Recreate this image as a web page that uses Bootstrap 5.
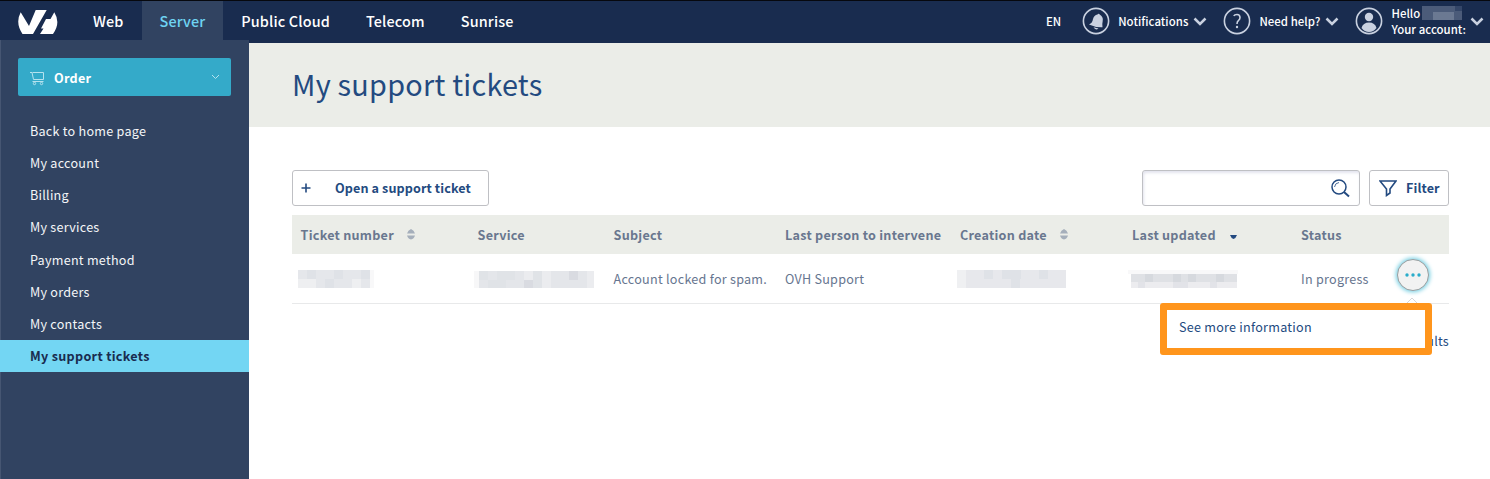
<!DOCTYPE html>
<html lang="en">
<head>
<meta charset="utf-8">
<meta name="viewport" content="width=device-width, initial-scale=1">
<title>My support tickets</title>
<link href="https://cdn.jsdelivr.net/npm/bootstrap@5.3.0/dist/css/bootstrap.min.css" rel="stylesheet">
<style>
  body { font-family: "Noto Sans CJK SC", "Open Sans", sans-serif; font-size: 12.6px; line-height: 20px; letter-spacing: .25px; color: #66758f; height: 479px; overflow: hidden; }
  .topbar { height: 43px; background: #192c4f; border-top: 1px solid #06080e; color: #fff; }
  .topbar .tab { height: 39px; color: #fff; font-size: 14.4px; font-weight: 500; line-height: 39px; padding: 0 18px; letter-spacing: .15px; text-decoration: none; white-space: nowrap; }
  .topbar .tab.on { background: #314361; color: #6fd3f2; }
  .logo { margin: 8px 16px 0 17px; }
  .tools { font-size: 11.4px; font-weight: 500; letter-spacing: .05px; white-space: nowrap; height: 40px; }
  .tools .who { line-height: 16px; margin: 0 4px 0 8px; }
  .t-en { margin-right: 21px; }
  .t-not, .t-help { margin: 0 5px 0 8px; }
  .i-help, .i-user { margin-left: 16px; }
  .tools .chev:last-child { margin-right: 6px; }
  .side { width: 249px; margin-top: -3px; height: 439px; background: #314361; border-left: 1px solid #465672; z-index: 2; }
  .order { margin: 18px 18px 19px 17px; height: 38px; border-radius: 2px; background: #34aac9; color: #fff; font-weight: 700; padding: 0 11px 0 12px; }
  .order span { padding-top: 2px; }
  .side a { height: 32.13px; line-height: 32px; padding-left: 29px; color: #f4f6f8; text-decoration: none; }
  .side a.on { margin-left: -1px; padding-left: 30px; background: #73d6f3; color: #192c4f; font-weight: 700; letter-spacing: .3px; height: 32px; }
  .headband { height: 84px; background: #ebede8; padding-left: 43px; }
  .headband h1 { font-size: 28.8px; font-weight: 400; line-height: 81px; color: #234a80; letter-spacing: .25px; }
  .work { padding: 43px 41px 0 43px; }
  .box { height: 36px; border: 1px solid #bfc0c4; border-radius: 3px; background: #fff; color: #234a80; font-weight: 700; letter-spacing: .1px; }
  .t-open { width: 197px; }
  .t-open span { margin-left: 16px; }
  .t-filter { width: 80px; margin-left: 9px; padding-left: 9px; }
  .t-filter span { margin-left: 9px; }
  .search { width: 218px; box-shadow: inset 1px 2px 3px #e3e4ee; padding-right: 9px; }
  .tickets { table-layout: fixed; width: 1157px; margin: 9px 0 0; border-collapse: separate; border-spacing: 0; }
  .tickets th, .tickets td { padding: 0 0 0 9px; white-space: nowrap; vertical-align: middle; }
  .tickets th:nth-child(-n+3), .tickets td:nth-child(3) { padding-left: 8.6px; }
  .tickets th { height: 39px; background: #ebede8; font-weight: 700; color: #69778f; }
  .tickets td { height: 50px; padding-top: 1px; border-bottom: 1px solid #e8e9ea; }
  .sorter { margin: -3px 0 0 13px; }
  .sorter.down { margin: 3px 0 0 14px; }
  .mosaic { display: block; }
  .dots { width: 32px; height: 32px; border: 1px solid #999ea0; border-radius: 50%; background: #f2f2f2; box-shadow: 0 0 4px 1px #6fcce0; padding: 0; margin-top: -8px; }
  .pop { left: -237px; top: 44px; width: 272px; height: 52px; border: 7px solid #ff951c; border-radius: 3px; background: #fff; color: #234a80; padding-left: 12px; line-height: 34px; z-index: 3; }
  .notch { left: 8px; top: 38px; }
  .count { color: #234a80; margin-top: 27px; }
</style>
</head>
<body>
<header class="topbar d-flex">
  <svg class="logo flex-shrink-0" width="42" height="26" viewBox="0 0 42 26"><path fill="#fff" d="M3.700 3.300 12 17 18.700 1H29.700L16 25H5.500Q-2 14 3.700 3.300ZM37.300 3.300Q44 14 36 25H23L26.500 19.500H24L29 10H33.500Z"/></svg>
  <nav class="d-flex">
    <a class="tab" href="#">Web</a><a class="tab on" href="#">Server</a><a class="tab" href="#">Public Cloud</a><a class="tab" href="#">Telecom</a><a class="tab" href="#">Sunrise</a>
  </nav>
  <div class="tools d-flex align-items-center ms-auto">
    <span class="t-en">EN</span>
    <svg width="28" height="28" viewBox="0 0 28 28"><circle cx="14" cy="14" r="12.600" fill="none" stroke="#c9d1e0" stroke-width="1.600"/><path fill="#c9d1e0" d="M7 17.500Q10.500 16 11 12Q12 8 15.500 7.500Q16.500 6 18 7.800Q21.500 10 20.700 14Q20 17 20.500 20.300Q13 20.500 7 17.500ZM11.500 20.300 16.500 21.500Q13.500 23.800 11.500 20.300Z"/></svg>
    <span class="t-not">Notifications</span>
    <svg class="chev" width="14" height="9" viewBox="0 0 14 9"><path d="M1.500 1.500 7 7 12.500 1.500" fill="none" stroke="#c9d1e0" stroke-width="2.500"/></svg>
    <svg class="i-help" width="28" height="28" viewBox="0 0 28 28"><circle cx="14" cy="14" r="12.600" fill="none" stroke="#c9d1e0" stroke-width="1.600"/><path d="M10.800 9Q11.500 7.500 14 7.500Q17 7.500 17 10.500Q17 12.300 15.500 13.500Q14 14.500 14 17" fill="none" stroke="#c9d1e0" stroke-width="1.600"/><circle cx="14" cy="20" r="1.200" fill="#c9d1e0"/></svg>
    <span class="t-help">Need help?</span>
    <svg class="chev" width="14" height="9" viewBox="0 0 14 9"><path d="M1.500 1.500 7 7 12.500 1.500" fill="none" stroke="#c9d1e0" stroke-width="2.500"/></svg>
    <svg class="i-user" width="28" height="28" viewBox="0 0 28 28"><circle cx="14" cy="14" r="12.600" fill="none" stroke="#c9d1e0" stroke-width="1.600"/><circle cx="14" cy="10" r="4.200" fill="#c9d1e0"/><path fill="#c9d1e0" d="M6.500 21Q8 15.500 14 15.500T21.500 21Q18.500 25 14 25T6.500 21Z"/></svg>
    <div class="who"><div class="d-flex align-items-center">Hello <svg style="margin-left:2px" width="40" height="14"><path fill="#4b5b79" d="M0 0H40V14H0Z"/><path fill="#6b7992" d="M11 6H32V14H11Z"/><path fill="#344668" d="M33 0H40V5H33Z"/></svg></div>Your account:</div>
    <svg class="chev" width="14" height="9" viewBox="0 0 14 9"><path d="M1.500 1.500 7 7 12.500 1.500" fill="none" stroke="#c9d1e0" stroke-width="2.500"/></svg>
  </div>
</header>
<div class="d-flex">
  <aside class="side position-relative flex-shrink-0 d-flex flex-column">
    <div class="order d-flex align-items-center">
      <svg class="mt-1" width="16" height="16" viewBox="0 0 16 16" fill="none" stroke="#b5e2ee"><path d="M0 1.500H2L3.500 8.500H13.500V1.500H2.500M2.500 10.500H13.500"/><circle cx="4.500" cy="12.500" r="1.200"/><circle cx="11.500" cy="12.500" r="1.200"/></svg>
      <span class="ms-2">Order</span>
      <svg class="ms-auto" width="9" height="6" viewBox="0 0 9 6"><path d="M1 1 4.500 4.500 8 1" fill="none" stroke="#b5e2ee"/></svg>
    </div>
    <nav class="d-flex flex-column">
      <a href="#">Back to home page</a><a href="#">My account</a><a href="#">Billing</a><a href="#">My services</a><a href="#">Payment method</a><a href="#">My orders</a><a href="#">My contacts</a><a class="on" href="#">My support tickets</a>
    </nav>
  </aside>
  <main class="flex-grow-1">
    <div class="headband"><h1 class="m-0">My support tickets</h1></div>
    <div class="work">
      <div class="d-flex">
        <button class="box t-open d-flex align-items-center p-0"><svg class="mx-2" width="10" height="10" viewBox="0 0 10 10"><path d="M0.500 5H9.500M5 .5V9.500" stroke="#234a80" stroke-width="1.600"/></svg><span>Open a support ticket</span></button>
        <div class="box search ms-auto d-flex align-items-center justify-content-end"><svg width="19" height="19" viewBox="0 0 19 19" fill="none" stroke="#234a80"><circle cx="8" cy="8" r="7" stroke-width="1.500"/><path d="M13 13 18 17.500" stroke-width="2"/><path d="M3.500 8Q4 4 8 3.500" stroke-width=".8"/></svg></div>
        <button class="box t-filter d-flex align-items-center py-0 pe-0"><svg width="18" height="17" viewBox="0 0 18 17"><path d="M1 1H17L11 9V13L7.500 15.500V9Z" fill="none" stroke="#234a80" stroke-width="1.600"/></svg><span>Filter</span></button>
      </div>
      <table class="tickets">
        <colgroup><col width="177"><col width="136"><col width="171"><col width="175"><col width="172"><col width="169"><col width="96"><col width="61"></colgroup>
        <thead><tr>
          <th>Ticket number<svg class="sorter" width="9" height="11"><path fill="#a5afbb" d="M0 4.500Q1 1 4 0Q7 1 8 4.500ZM0 6.500H8Q7 10 4 10.500Q1 10 0 6.500Z"/></svg></th>
          <th>Service</th><th>Subject</th><th>Last person to intervene</th>
          <th>Creation date<svg class="sorter" width="9" height="11"><path fill="#a5afbb" d="M0 4.500Q1 1 4 0Q7 1 8 4.500ZM0 6.500H8Q7 10 4 10.500Q1 10 0 6.500Z"/></svg></th>
          <th>Last updated<svg class="sorter down" width="8" height="5"><path fill="#234a80" d="M0 0H7Q6 3 3.500 4Q1 3 0 0Z"/></svg></th>
          <th>Status</th><th></th>
        </tr></thead>
        <tbody><tr>
          <td><svg class="mosaic" width="76" height="18" style="margin-left:-3px"><path fill="#e5e7eb" d="M0 0H72V18H0Z"/><path fill="#dfe2e7" d="M9 0H18V9H9ZM36 0H45V9H36ZM63 0H72V9H63ZM27 9H36V18H27Z"/><path fill="#eeeff1" d="M0 9H18V18H0ZM54 9H63V18H54Z"/><path fill="#f8f8f9" d="M72 0H76V18H72Z"/></svg></td>
          <td><svg class="mosaic" width="120" height="17" style="margin-left:-4px"><path fill="#f7f7f8" d="M0 0H5V17H0Z"/><path fill="#e4e6ea" d="M5 0H113V17H5Z"/><path fill="#e0e3e7" d="M5 0H14V9H5ZM23 0H41V9H23ZM59 0H68V17H59ZM14 9H32V17H14Z"/><path fill="#d9dbe1" d="M50 9H59V17H50ZM95 0H104V9H95Z"/><path fill="#ebecef" d="M50 0H59V9H50ZM68 0H77V17H68ZM113 0H120V17H113Z"/></svg></td>
          <td>Account locked for spam.</td><td>OVH Support</td>
          <td><svg class="mosaic" width="109" height="18" style="margin-left:-3px"><path fill="#e7e8ec" d="M0 0H109V18H0Z"/><path fill="#eff0f2" d="M0 0H9V18H0Z"/><path fill="#dfe2e7" d="M27 0H36V9H27ZM45 0H64V9H45ZM82 0H91V9H82ZM54 9H63V18H54Z"/></svg></td>
          <td><svg class="mosaic" width="110" height="18" style="margin-left:-4px"><path fill="#f8f8f9" d="M0 0H110V4H0Z"/><path fill="#dfe1e5" d="M3 4H109V12H3Z"/><path fill="#ececef" d="M3 12H109V18H3Z"/><path fill="#d6d9de" d="M17 4H25V12H17ZM45 4H53V12H45ZM60 4H68V12H60ZM88 4H96V12H88Z"/><path fill="#e2e3e8" d="M10 12H17V18H10ZM45 12H60V18H45ZM82 12H89V18H82Z"/></svg></td>
          <td>In progress</td>
          <td class="overflow-visible"><div class="position-relative"><button class="dots d-flex align-items-center justify-content-center"><svg width="16" height="4"><circle cx="2" cy="2" r="1.700" fill="#2aacca"/><circle cx="8" cy="2" r="1.700" fill="#2aacca"/><circle cx="14" cy="2" r="1.700" fill="#2aacca"/></svg></button>
            <svg class="notch position-absolute" width="14" height="8"><path d="M1 7 7 1 13 7" fill="#fff" stroke="#d5d6d8"/></svg>
            <div class="pop position-absolute">See more information</div></div></td>
        </tr></tbody>
      </table>
      <div class="count text-end">results</div>
    </div>
  </main>
</div>
<script src="https://cdn.jsdelivr.net/npm/bootstrap@5.3.0/dist/js/bootstrap.bundle.min.js"></script>
</body>
</html>
